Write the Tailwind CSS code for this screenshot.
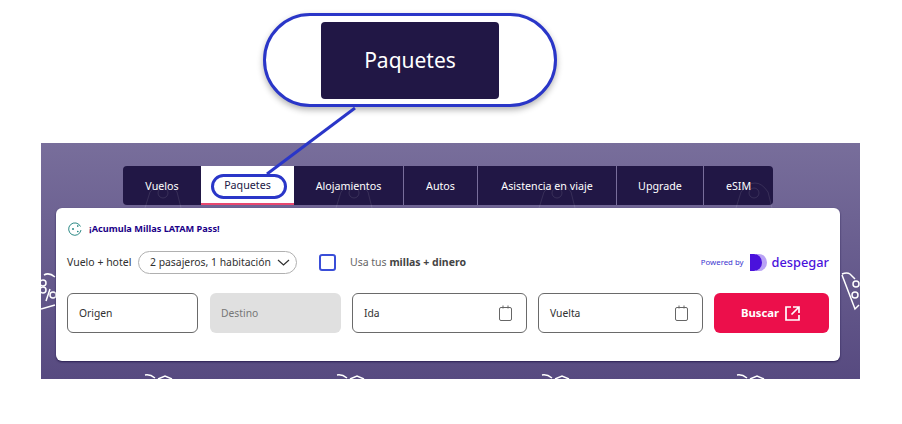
<!DOCTYPE html>
<html lang="es">
<head>
    <meta charset="UTF-8" />
    <meta name="viewport" content="width=device-width, initial-scale=1.0" />
    <title>Paquetes</title>
    <script src="https://cdn.jsdelivr.net/npm/@tailwindcss/browser@4"></script>
</head>
<body class="bg-white font-['Noto_Sans',sans-serif] overflow-hidden">
    <div class="relative w-[902px] h-[424px] pt-[13px]">
        <!-- callout -->
        <div class="ml-[263px] w-[294px] h-[94px] border-[3px] border-[#2a36c8] rounded-[47px] shadow-[0_3px_6px_rgba(0,0,0,0.3)] flex items-center justify-center bg-white">
            <div class="w-[178px] h-[77px] pt-[2px] bg-[#211745] rounded-[4px] flex items-center justify-center text-white text-[21px]">Paquetes</div>
        </div>

        <!-- panel -->
        <div class="relative mt-[36px] ml-[41px] w-[819px] h-[236px] pt-[23px] overflow-hidden bg-gradient-to-b from-[#786e9b] to-[#574a80]">
            <!-- background tags -->
            <svg class="absolute left-0 top-0" width="819" height="236" fill="none" stroke="#fff" stroke-width="1.500">
                <path d="M104 232q5-1 10 3M117 236l7-3 7 3" />
                <path d="M296 232q5-1 10 3M309 236l7-3 7 3" />
                <path d="M501 232q5-1 10 3M514 236l7-3 7 3" />
                <path d="M696 232q5-1 10 3M709 236l7-3 7 3" />
                <path d="M3 132q5-3 11 2M5 158l4-12M0 166l14-4" />
                <circle cx="2" cy="140" r="3" />
                <circle cx="2" cy="147" r="3" />
                <circle cx="12" cy="152" r="3" />
                <path d="M801 131q5-2 8 0l5 5M801 132l13 34 4-4" />
                <circle cx="815" cy="141" r="3" />
                <circle cx="814" cy="152" r="3" />
            </svg>

            <!-- tabs -->
            <div class="relative ml-[82px] w-[650px] h-[39px] flex text-[10.700px] text-white">
                <div class="w-[78px] pt-[1px] flex items-center justify-center bg-[#211745] rounded-l-[4px]">Vuelos</div>
                <div class="w-[93px] pt-[1px] flex items-center justify-center bg-white text-[#211745] border-b-2 border-[#e8476f]">Paquetes</div>
                <div class="w-[110px] pt-[1px] flex items-center justify-center bg-[#211745] border-r border-[#786e9b]">Alojamientos</div>
                <div class="w-[74px] pt-[1px] flex items-center justify-center bg-[#211745] border-r border-[#786e9b]">Autos</div>
                <div class="w-[139px] pt-[1px] flex items-center justify-center bg-[#211745] border-r border-[#786e9b]">Asistencia en viaje</div>
                <div class="w-[87px] pt-[1px] flex items-center justify-center bg-[#211745] border-r border-[#786e9b]">Upgrade</div>
                <div class="w-[69px] pt-[1px] flex items-center justify-center bg-[#211745] rounded-r-[4px]">eSIM</div>
            </div>

            <!-- faint tags showing through the tab bar -->
            <svg class="absolute left-0 top-0" width="819" height="70" fill="none" stroke="#fff" stroke-width="1" stroke-opacity="0.100">
                <path d="M104 65l5-16q7-9 14-9t13 9l4 16" />
                <circle cx="122" cy="50" r="5" />
                <path d="M295 65l5-16q7-9 14-9t13 9l4 16" />
                <circle cx="313" cy="50" r="5" />
                <path d="M498 65l5-16q7-9 14-9t13 9l4 16" />
                <circle cx="516" cy="50" r="5" />
                <path d="M695 65l5-16q7-9 14-9t13 9l4 16" />
                <circle cx="713" cy="50" r="5" />
            </svg>

            <!-- search card -->
            <div class="relative ml-[15px] mt-[3px] w-[784px] h-[153px] bg-white rounded-[6px] shadow-[0_1px_2px_rgba(20,10,60,0.7)] px-[11px] pt-[12px]">
                <div class="flex items-center h-[18px]">
                    <svg class="ml-[1px] mr-[7px]" width="14" height="14" viewBox="0 0 14 14" fill="none" stroke="#2d8a86" stroke-width="1">
                        <path d="M12.500 4.500A6.200 6.200 0 1 0 13 8" />
                        <path d="M4 7h2M5 6v2M9 4h1.500M9.700 3.300v1.500M9 9.500h1.500M9.700 8.800v1.500" />
                    </svg>
                    <span class="text-[9.200px] font-bold text-[#1b0088]">¡Acumula Millas LATAM Pass!</span>
                </div>

                <div class="flex items-center h-[23px] mt-[13px] text-[10.500px] text-[#303030]">
                    <span class="w-[71px]">Vuelo + hotel</span>
                    <div class="w-[159px] h-[23px] border border-[#b0b0b0] rounded-[12px] flex items-center pl-[11px] gap-[6px]">
                        <span class="whitespace-nowrap text-[10.400px]">2 pasajeros, 1 habitación</span>
                        <svg width="13" height="7" viewBox="0 0 13 7" fill="none" stroke="#303030" stroke-width="1.200"><path d="M1 1l5.500 5 5.500-5" /></svg>
                    </div>
                    <div class="ml-[22px] w-[17px] h-[17px] border-2 border-[#3a4ed8] rounded-[3px]"></div>
                    <span class="ml-[14px] text-[#666]">Usa tus <b class="font-bold text-[#444]">millas + dinero</b></span>
                    <span class="ml-auto text-[7.800px] text-[#3b35d0]">Powered by</span>
                    <svg class="ml-[6px]" width="17" height="17" viewBox="0 0 17 17">
                        <path d="M6 0h3a8 8.500 0 0 1 0 17H6z" fill="#b9a2f5" />
                        <path d="M0 0h4a8 8.500 0 0 1 0 17H0z" fill="#4a12dc" />
                    </svg>
                    <span class="ml-[5px] text-[12.800px] font-medium text-[#4a12dc]">despegar</span>
                </div>

                <div class="flex mt-[19px] h-[40px] text-[10.300px] text-[#303030]">
                    <div class="w-[131px] pt-[1px] border border-[#6a6a6a] rounded-[6px] flex items-center pl-[11px]">Origen</div>
                    <div class="ml-[12px] w-[131px] pt-[1px] bg-[#e0e0e0] rounded-[6px] flex items-center pl-[11px] text-[#777]">Destino</div>
                    <div class="ml-[11px] w-[175px] border border-[#6a6a6a] rounded-[6px] flex items-center justify-between pl-[11px] pr-[14px]">
                        <span class="pt-[1px]">Ida</span>
                        <svg width="13" height="16" viewBox="0 0 13 16" fill="none" stroke="#666" stroke-width="1"><rect x="0.500" y="2.500" width="12" height="13" rx="1.500" /><path d="M4 0.500v3M9 0.500v3" /></svg>
                    </div>
                    <div class="ml-[11px] w-[165px] border border-[#6a6a6a] rounded-[6px] flex items-center justify-between pl-[11px] pr-[14px]">
                        <span class="pt-[1px]">Vuelta</span>
                        <svg width="13" height="16" viewBox="0 0 13 16" fill="none" stroke="#666" stroke-width="1"><rect x="0.500" y="2.500" width="12" height="13" rx="1.500" /><path d="M4 0.500v3M9 0.500v3" /></svg>
                    </div>
                    <div class="ml-[11px] w-[115px] pr-[2px] bg-[#ec0f4b] rounded-[6px] flex items-center justify-center gap-[6px] text-white text-[11.300px] font-bold">
                        <span>Buscar</span>
                        <svg width="15" height="15" viewBox="0 0 15 15" fill="none" stroke="#fff" stroke-width="1.700"><path d="M6 1H1v13h13V9M8 1h6v6M14 1L6.500 8.500" /></svg>
                    </div>
                </div>
            </div>
        </div>

        <!-- connector and tab highlight, over the panel -->
        <svg class="absolute left-0 top-0 pointer-events-none" width="902" height="424" fill="none">
            <path d="M355 108L267 174" stroke="#2a36c8" stroke-width="3" />
            <rect x="212.500" y="175.500" width="73" height="22" rx="11" stroke="#2a36c8" stroke-width="3" />
        </svg>
    </div>
</body>
</html>
